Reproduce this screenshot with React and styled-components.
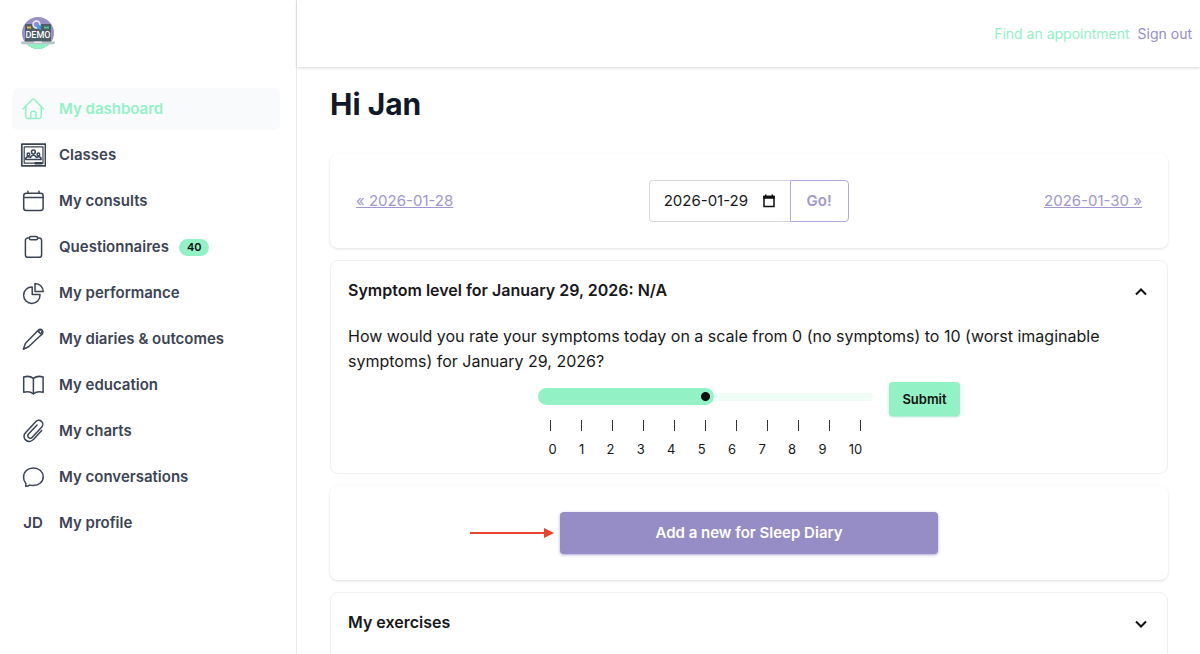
import { useState } from "react";
import styled, { createGlobalStyle } from "styled-components";

const NAV_ITEMS = [
  { label: "My dashboard", icon: "home", active: true },
  { label: "Classes", icon: "classes" },
  { label: "My consults", icon: "calendar" },
  { label: "Questionnaires", icon: "clipboard", count: 40 },
  { label: "My performance", icon: "pie" },
  { label: "My diaries & outcomes", icon: "pencil" },
  { label: "My education", icon: "book" },
  { label: "My charts", icon: "clip" },
  { label: "My conversations", icon: "chat" },
  { label: "My profile", initials: "JD" },
];

const SCALE = [0, 1, 2, 3, 4, 5, 6, 7, 8, 9, 10];

const ICONS = {
  home: (
    <>
      <path d="M3 13 12.3 3.4a1.4 1.4 0 0 1 2 0L23.6 13" />
      <path d="M5.8 10.4v10.4c0 1 .7 1.7 1.7 1.7h12c1 0 1.7-.7 1.7-1.7V10.4" />
      <path d="M10.8 22.3v-5.1c0-1.2 1-2 2.6-2s2.6.8 2.6 2v5.1" />
    </>
  ),
  classes: (
    <>
      <rect x="1.8" y="2.2" width="23.6" height="21.6" strokeWidth="1.7" />
      <rect x="4.2" y="4.8" width="18.8" height="16.4" strokeWidth="1.2" />
      <circle cx="13.4" cy="10" r="1.9" />
      <circle cx="8.4" cy="12.4" r="1.3" />
      <circle cx="18.4" cy="12.4" r="1.3" />
      <path d="M5.6 17.4c0-1.8 1-2.7 2.8-2.7.9 0 1.5.2 2 .7.5-1.4 1.5-2.1 3-2.1s2.5.7 3 2.1c.5-.5 1.1-.7 2-.7 1.800 0 2.8.9 2.8 2.700z" />
      <path d="M15.6 21.2h6" strokeWidth="2.6" />
    </>
  ),
  calendar: (
    <>
      <rect x="3.7" y="5.2" width="19.4" height="17.3" rx="2.5" />
      <path d="M3.7 9.4h19.4M7.9 3.3v2M19 3.3v2" />
    </>
  ),
  clipboard: (
    <>
      <path d="M9.3 3.9H8a2.6 2.6 0 0 0-2.6 2.6v14.2A2.6 2.6 0 0 0 8 23.3h11a2.6 2.6 0 0 0 2.6-2.6V6.5A2.6 2.6 0 0 0 19 3.9h-1.3" />
      <rect x="9.4" y="2.5" width="8.2" height="3.3" rx="1.6" />
    </>
  ),
  pie: (
    <>
      <path d="M12.2 7v7.6H20A8.2 8.2 0 1 1 12.2 7z" />
      <path d="M15 3.5a8.2 8.2 0 0 1 8.2 8H15z" />
    </>
  ),
  pencil: (
    <>
      <path d="M18.4 4.1a2.6 2.6 0 0 1 4 .3 2.6 2.6 0 0 1 0 3.3L8.6 20.7 3.3 23.2l2.2-5.9z" />
      <path d="m17.7 5 4 3.5" />
      <circle cx="20.4" cy="5.9" r="1.5" strokeWidth="1" />
    </>
  ),
  book: (
    <>
      <path d="M13.4 6.4C10.8 4.3 7 4 3.7 5v15.3c3.3-.9 7.1-.6 9.7 1.5 2.6-2.1 6.4-2.4 9.7-1.5V5c-3.3-1-7.1-.7-9.7 1.4z" />
      <path d="M13.4 6.4v15.4" />
    </>
  ),
  clip: (
    <path d="m21.7 12.6-8.3 8.8a5.200 5.200 0 0 1-7.6.7 5 5 0 0 1-.5-7.2L15.9 3.6a3.9 3.9 0 0 1 5.6-.2 3.9 3.9 0 0 1 .3 5.500L12 19.400a2.400 2.400 0 0 1-3.500.1 2.400 2.400 0 0 1 0-3.400l8.600-9.100" />
  ),
  chat: (
    <path d="M5.7 22.3c.3-1.3.3-2.5-.1-3.4a9.4 8.5 0 0 1-2-5.9c0-5.2 4.1-9 9.8-9s9.8 3.8 9.8 8.7c0 5.2-4.200 8.8-9.8 8.8-1.4 0-2.6-.1-3.7-.4-1.200.9-2.600 1.200-4 1.200z" />
  ),
};

const NavIcon = ({ name }) => (
  <IconSvg viewBox="0 0 26 26" aria-hidden="true">
    {ICONS[name]}
  </IconSvg>
);

const Logo = () => (
  <LogoSvg viewBox="0 0 34 34" role="img" aria-label="Demo">
    <defs>
      <clipPath id="disc">
        <circle cx="17" cy="17" r="16" />
      </clipPath>
    </defs>
    <circle cx="17" cy="17" r="16" fill="#9a90c8" />
    <rect x="0" y="27" width="34" height="7" fill="#90f2c4" clipPath="url(#disc)" />
    <rect x="4" y="8" width="26" height="18" rx="1" fill="#4f5d66" />
    <rect x="6" y="10.5" width="4" height="2" fill="#e9b93c" />
    <rect x="23" y="10.5" width="5" height="2" fill="#4cc38a" />
    <circle cx="15.5" cy="8.5" r="3.5" fill="#9a90c8" stroke="#eef0f7" strokeWidth="1.5" />
    <path d="m15.5 8 5.5 2-2 1 1.5 2-1.5 1-1.5-2-1.2 1.5z" fill="#3fa0ec" />
    <LogoText x="17" y="22">DEMO</LogoText>
    <path d="M0 25.5h34v1.2a2 2 0 0 1-2 1.6H2a2 2 0 0 1-2-1.6z" fill="#b9c3c9" />
    <path d="M13 25.5h8v1.3h-8z" fill="#edf0f2" />
  </LogoSvg>
);

const Chevron = ({ up }) => (
  <ChevronSvg viewBox="0 0 14 14" aria-hidden="true">
    <path d={up ? "m2 9.5 5-5 5 5" : "m2 4.5 5 5 5-5"} />
  </ChevronSvg>
);

const App = () => {
  const [level, setLevel] = useState(5);
  const [date, setDate] = useState("2026-01-29");
  const [symptomOpen, setSymptomOpen] = useState(true);

  return (
    <>
      <GlobalStyle />
      <Page>
        <Sidebar>
          <Logo />
          <Nav>
            {NAV_ITEMS.map((item) => (
              <NavLink href="#" key={item.label} $active={item.active}>
                {item.initials ? <Initials>{item.initials}</Initials> : <NavIcon name={item.icon} />}
                {item.label}
                {item.count && <Count>{item.count}</Count>}
              </NavLink>
            ))}
          </Nav>
        </Sidebar>

        <Content>
          <TopBar>
            <TopLink href="#" $green>Find an appointment</TopLink>
            <TopLink href="#">Sign out</TopLink>
          </TopBar>

          <Main>
            <Title>Hi Jan</Title>

            <Card>
              <DayLink href="#">« 2026-01-28</DayLink>
              <DateForm onSubmit={(e) => e.preventDefault()}>
                <DateField>
                  <DateInput
                    aria-label="Date"
                    value={date}
                    onChange={(e) => setDate(e.target.value)}
                  />
                  <CalendarSvg viewBox="0 0 14 14" aria-hidden="true">
                    <path d="M2 2.5h10v10H2z" fill="none" stroke="currentColor" strokeWidth="1.5" />
                    <path d="M1.3 1.8h11.4v3H1.3zM3 .5h1.5v2H3zM9.5.5H11v2H9.5z" />
                  </CalendarSvg>
                </DateField>
                <GoButton type="submit">Go!</GoButton>
              </DateForm>
              <DayLink href="#">2026-01-30 »</DayLink>
            </Card>

            <Panel>
              <PanelHeader
                type="button"
                aria-expanded={symptomOpen}
                onClick={() => setSymptomOpen(!symptomOpen)}
              >
                Symptom level for January 29, 2026: N/A
                <Chevron up={symptomOpen} />
              </PanelHeader>
              {symptomOpen && (
                <PanelBody>
                  <Question htmlFor="level">
                    How would you rate your symptoms today on a scale from 0 (no symptoms) to 10
                    (worst imaginable symptoms) for January 29, 2026?
                  </Question>
                  <RatingRow>
                    <Rating>
                      <Range
                        id="level"
                        type="range"
                        min="0"
                        max="10"
                        value={level}
                        onChange={(e) => setLevel(Number(e.target.value))}
                        style={{ "--fill": `${level * 10}%` }}
                      />
                      <Ticks>
                        {SCALE.map((n) => (
                          <Tick key={n} />
                        ))}
                      </Ticks>
                      <Labels>
                        {SCALE.map((n) => (
                          <span key={n}>{n}</span>
                        ))}
                      </Labels>
                    </Rating>
                    <SubmitButton type="button">Submit</SubmitButton>
                  </RatingRow>
                </PanelBody>
              )}
            </Panel>

            <Card $center>
              <DiaryAction>
                <Arrow viewBox="0 0 84 12" aria-hidden="true">
                  <path d="M0 6h75" stroke="#e8452c" strokeWidth="2" />
                  <path d="M74 1v10l10-5z" fill="#e8452c" />
                </Arrow>
                <DiaryButton type="button">Add a new for Sleep Diary</DiaryButton>
              </DiaryAction>
            </Card>

            <Panel>
              <PanelHeader type="button" aria-expanded="false">
                My exercises
                <Chevron />
              </PanelHeader>
            </Panel>
          </Main>
        </Content>
      </Page>
    </>
  );
};

export default App;

const GlobalStyle = createGlobalStyle`
  *, *::before, *::after {
    box-sizing: border-box;
  }

  body {
    margin: 0;
    overflow: hidden;
    background: #fff;
    color: #18181b;
    font-family: Inter, "Liberation Sans", sans-serif;
    font-size: 16px;
    line-height: 24px;
  }

  button, input {
    font: inherit;
    color: inherit;
  }
`;

const Page = styled.div`
  display: flex;
  height: 100vh;
`;

const Sidebar = styled.aside`
  flex: 0 0 297px;
  padding: 16px 16px 0 12px;
  border-right: 1px solid #e9eaed;
`;

const LogoSvg = styled.svg`
  display: block;
  width: 34px;
  height: 34px;
  margin-left: 9px;
`;

const LogoText = styled.text`
  fill: #fff;
  font-family: Roboto, "Liberation Sans", sans-serif;
  font-size: 9px;
  font-weight: 500;
  text-anchor: middle;
`;

const Nav = styled.nav`
  display: flex;
  flex-direction: column;
  gap: 4px;
  margin-top: 38px;
`;

const NavLink = styled.a`
  display: flex;
  align-items: center;
  height: 42px;
  padding: 0 8px;
  border-radius: 6px;
  background: ${(props) => (props.$active ? "#f9fafb" : "transparent")};
  color: ${(props) => (props.$active ? "#92f2c5" : "#3b4455")};
  font-size: 15px;
  font-weight: 600;
  text-decoration: none;
`;

const IconSvg = styled.svg`
  flex: none;
  width: 26px;
  height: 26px;
  margin-right: 13px;
  fill: none;
  stroke: currentColor;
  stroke-width: 1.5;
  stroke-linecap: round;
  stroke-linejoin: round;
`;

const Initials = styled.span`
  width: 26px;
  margin-right: 13px;
  text-align: center;
`;

const Count = styled.span`
  margin-left: 10px;
  padding: 0 8px;
  border-radius: 9px;
  background: #92f2c5;
  color: #111;
  font-size: 11px;
  line-height: 17px;
`;

const Content = styled.div`
  flex: 1;
  min-width: 0;
`;

const TopBar = styled.header`
  display: flex;
  align-items: center;
  justify-content: flex-end;
  gap: 8px;
  height: 67px;
  padding: 0 8px;
  box-shadow: 0 1px 3px rgba(0, 0, 0, 0.16);
`;

const TopLink = styled.a`
  color: ${(props) => (props.$green ? "#92f2c5" : "#968dc7")};
  font-size: 14px;
  text-decoration: none;
`;

const Main = styled.main`
  display: flex;
  flex-direction: column;
  gap: 12px;
  padding: 19px 32px 0 33px;
`;

const Title = styled.h1`
  margin: 0 0 20px;
  color: #111827;
  font-size: 30px;
  font-weight: 700;
  line-height: 36px;
`;

const Card = styled.section`
  display: flex;
  align-items: center;
  justify-content: ${(props) => (props.$center ? "center" : "space-between")};
  padding: 26px;
  border-radius: 8px;
  background: #fff;
  box-shadow: 0 1px 3px rgba(0, 0, 0, 0.12);
`;

const DayLink = styled.a`
  color: #a197d0;
  font-size: 15px;
`;

const DateForm = styled.form`
  display: flex;
  height: 42px;
`;

const DateField = styled.div`
  display: flex;
  align-items: center;
  width: 141px;
  padding: 0 14px;
  border: 1px solid #d8d8dc;
  border-right: 0;
  border-radius: 4px 0 0 4px;
`;

const DateInput = styled.input`
  flex: 1;
  min-width: 0;
  padding: 0;
  border: 0;
  outline: 0;
  background: none;
  font-size: 15px;
`;

const CalendarSvg = styled.svg`
  flex: none;
  width: 14px;
  height: 14px;
  color: #111;
  fill: currentColor;
`;

const GoButton = styled.button`
  width: 59px;
  padding: 0;
  border: 1px solid #b3a9e0;
  border-radius: 0 4px 4px 0;
  background: #fff;
  color: #a197d0;
  font-size: 15px;
  font-weight: 600;
`;

const Panel = styled.section`
  padding: 0 17px 12px;
  border: 1px solid #f0f0f2;
  border-radius: 8px;
`;

const PanelHeader = styled.button`
  display: flex;
  align-items: center;
  justify-content: space-between;
  width: 100%;
  height: 58px;
  padding: 0 2px 0 0;
  border: 0;
  background: none;
  font-size: 16px;
  font-weight: 600;
  text-align: left;
`;

const ChevronSvg = styled.svg`
  width: 14px;
  height: 14px;
  margin-top: 4px;
  fill: none;
  stroke: #111;
  stroke-width: 2;
`;

const PanelBody = styled.div`
  padding-top: 5px;
`;

const Question = styled.label`
  display: block;
  font-size: 16px;
  line-height: 25px;
`;

const RatingRow = styled.div`
  display: flex;
  align-items: flex-start;
  justify-content: center;
  gap: 16px;
  margin-top: 8px;
`;

const Rating = styled.div`
  flex: 0 1 335px;
  padding-top: 6px;
`;

const Range = styled.input`
  appearance: none;
  display: block;
  width: 100%;
  height: 17px;
  margin: 0;
  border-radius: 9px;
  background:
    linear-gradient(#92f2c5, #92f2c5) left / var(--fill) 100% no-repeat,
    linear-gradient(#f0fdf7, #f0fdf7) center / 100% 8px no-repeat;

  &::-webkit-slider-thumb {
    appearance: none;
    width: 17px;
    height: 17px;
    border-radius: 50%;
    background: radial-gradient(circle, #111 4px, #92f2c5 5px);
  }
`;

const Ticks = styled.div`
  display: flex;
  justify-content: space-between;
  margin-top: 15px;
  padding: 0 12px;
`;

const Tick = styled.span`
  width: 1px;
  height: 11px;
  background: #333;
`;

const Labels = styled.div`
  display: flex;
  justify-content: space-between;
  padding: 6px 11px 0 10px;
  font-size: 13px;
`;

const SubmitButton = styled.button`
  height: 34px;
  padding: 0 13px;
  border: 0;
  border-radius: 4px;
  background: #92f2c5;
  box-shadow: 0 1px 2px rgba(80, 200, 150, 0.5);
  color: #111;
  font-size: 13px;
  font-weight: 600;
`;

const DiaryAction = styled.div`
  position: relative;
  width: 48%;
`;

const DiaryButton = styled.button`
  width: 100%;
  height: 42px;
  border: 0;
  border-radius: 4px;
  background: #968dc7;
  box-shadow: 0 1px 3px rgba(120, 108, 190, 0.6);
  color: #fff;
  font-size: 15px;
  font-weight: 600;
`;

const Arrow = styled.svg`
  position: absolute;
  top: 15px;
  right: calc(100% + 6px);
  width: 84px;
  height: 12px;
`;
